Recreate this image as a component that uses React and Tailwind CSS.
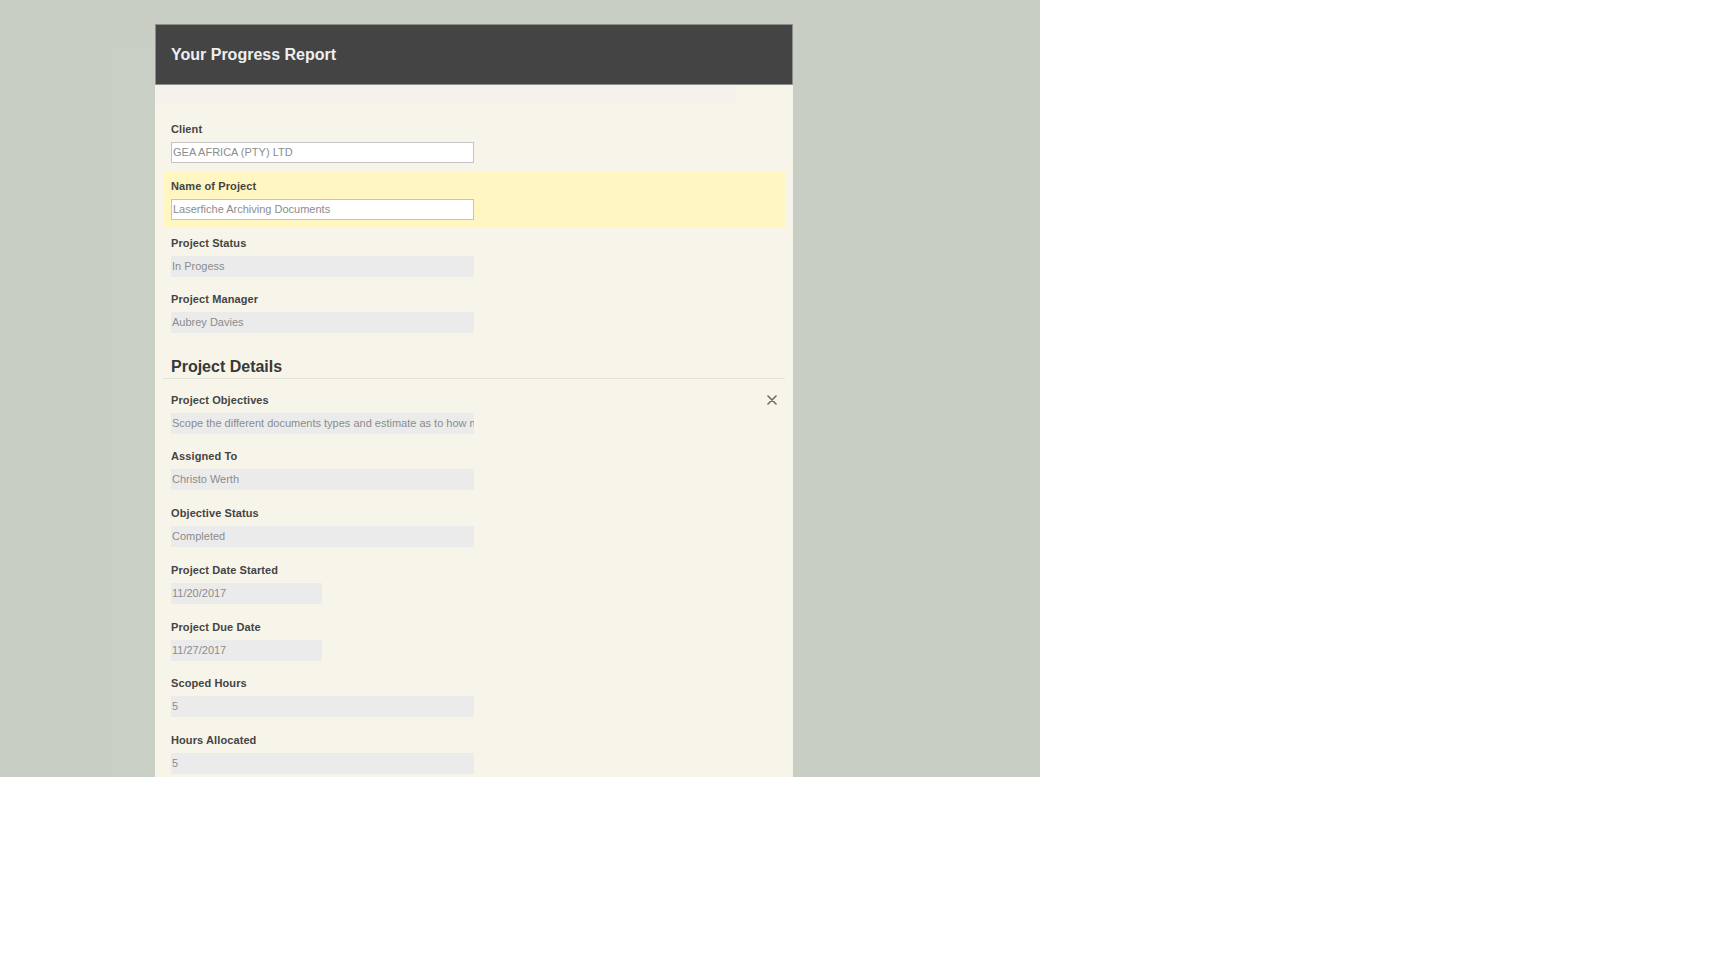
import React from "react";

const font = { fontFamily: '"Liberation Sans", Arial, sans-serif' };

function Field({ label, value, input, narrow, highlight, onRemove }) {
  return (
    <div className={`relative px-[8px] pt-[8px] pb-[7.75px] ${highlight ? "bg-[#fff6c1]" : ""}`}>
      <div className="h-[14px] leading-[14px] text-[11px] font-bold text-[#444444] tracking-[0.1px]">{label}</div>
      <div
        className={`mt-[6px] h-[21px] ${narrow ? "w-[151px]" : "w-[303px]"} overflow-hidden whitespace-nowrap text-[11px] text-[#8c8c8c] ${
          input ? "bg-white border border-[#c4c4c4] leading-[19px] px-[1px]" : "bg-[#ebebeb] leading-[21px] px-[1px]"
        }`}
      >
        {value}
      </div>
      {onRemove && (
        <button className="absolute right-[8px] top-[10px] w-[10px] h-[10px] flex items-center justify-center">
          <svg width="10" height="10" viewBox="0 0 10 10">
            <path d="M1 1 9 9M9 1 1 9" stroke="#6b6b6b" strokeWidth="1.6" strokeLinecap="round" />
          </svg>
        </button>
      )}
    </div>
  );
}

export default function App() {
  return (
    <div style={font} className="w-[1040px] h-[777px] overflow-hidden bg-[#c8cec4] flex pt-[24px]">
      <div className="w-[112px] shrink-0" />
      <div className="w-[43px] shrink-0 mt-[21px] bg-[#cacfc6]" />
      <div className="w-[638px] shrink-0 flex flex-col">
        <div className="h-[61px] shrink-0 bg-[#444444] border border-[#8d8d8d] flex items-center pl-[15px]">
          <h1 className="text-[16px] font-bold text-[#efefef]">Your Progress Report</h1>
        </div>
        <div className="flex-1 shrink-0 bg-[#f7f5ea]">
          <div className="mt-[1px] h-[19px] w-[582px] bg-[#f5f2ec]" />
          <div className="px-[8px] pt-[9px]">
            <Field label="Client" value="GEA AFRICA (PTY) LTD" input />
            <Field label="Name of Project" value="Laserfiche Archiving Documents" input highlight />
            <Field label="Project Status" value="In Progess" />
            <Field label="Project Manager" value="Aubrey Davies" />

            <div className="px-[8px] pt-[16px] pb-[1px] border-b border-[#e4e1d7] mb-[5.5px]">
              <h2 className="h-[20px] leading-[20px] text-[16px] font-bold text-[#383838]">Project Details</h2>
            </div>

            <Field
              label="Project Objectives"
              value="Scope the different documents types and estimate as to how many pages need to be archived"
              onRemove
            />
            <Field label="Assigned To" value="Christo Werth" />
            <Field label="Objective Status" value="Completed" />
            <Field label="Project Date Started" value="11/20/2017" narrow />
            <Field label="Project Due Date" value="11/27/2017" narrow />
            <Field label="Scoped Hours" value="5" />
            <Field label="Hours Allocated" value="5" />
          </div>
        </div>
      </div>
    </div>
  );
}
